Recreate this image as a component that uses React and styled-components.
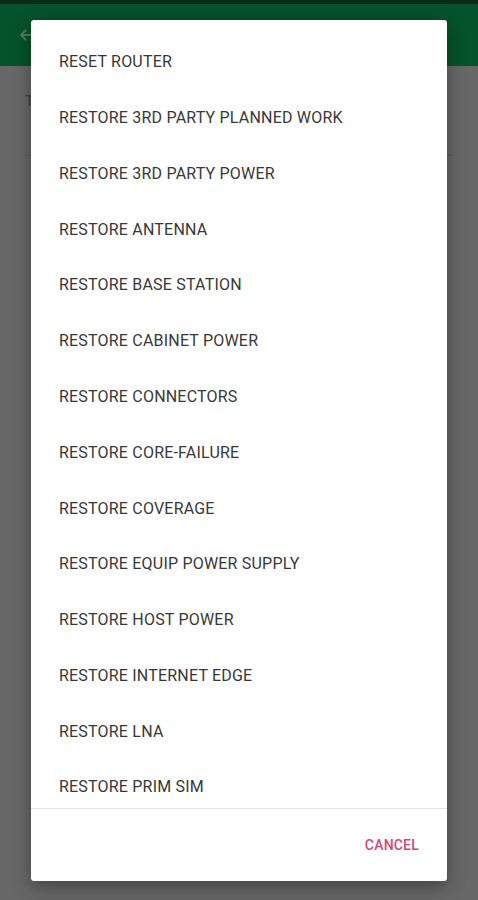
import React from 'react';
import styled, { createGlobalStyle } from 'styled-components';

const GlobalStyle = createGlobalStyle`
    html, body {
        margin: 0;
        padding: 0;
        background: #666666;
        font-family: Roboto, "Liberation Sans", sans-serif;
    }
`;

const Screen = styled.div`
    position: relative;
    width: 478px;
    height: 900px;
    overflow: hidden;
    background: #676767;
    display: flex;
    flex-direction: column;
`;

const StatusBar = styled.div`
    height: 4px;
    background: #0c2a18;
`;

const AppBar = styled.div`
    height: 62px;
    background: #05532a;
    display: flex;
    align-items: center;
    padding: 0 18px;
    color: #4d7a5c;
`;

const Content = styled.div`
    padding: 24px 25px 0;
`;

const FieldLabel = styled.div`
    font-size: 15px;
    color: #3f3f3f;
    padding-top: 2px;
`;

const FieldLine = styled.div`
    margin-top: 45px;
    height: 1px;
    background: #5a5a5a;
`;

const Dialog = styled.div`
    position: absolute;
    left: 31px;
    top: 20px;
    width: 416px;
    height: 861px;
    background: #ffffff;
    border-radius: 3px;
    box-shadow: 0 6px 18px rgba(0, 0, 0, 0.35);
    display: flex;
    flex-direction: column;
    overflow: hidden;
`;

const OptionList = styled.ul`
    list-style: none;
    margin: 0;
    padding: 14px 0 0;
    height: 788px;
    box-sizing: border-box;
    overflow: hidden;
    flex-shrink: 0;
`;

const Option = styled.li`
    height: 55.77px;
    display: flex;
    align-items: center;
    padding-left: 28px;
    font-size: 16px;
    color: #383838;
    letter-spacing: 0.2px;
`;

const Footer = styled.div`
    flex: 1;
    border-top: 1px solid #e4e4e4;
    display: flex;
    align-items: center;
    justify-content: flex-end;
    padding-right: 28px;
`;

const CancelButton = styled.button`
    background: none;
    border: none;
    padding: 0;
    font-family: inherit;
    font-size: 14px;
    font-weight: 500;
    color: #d6457c;
    letter-spacing: 0.2px;
`;

const options = [
    'RESET ROUTER',
    'RESTORE 3RD PARTY PLANNED WORK',
    'RESTORE 3RD PARTY POWER',
    'RESTORE ANTENNA',
    'RESTORE BASE STATION',
    'RESTORE CABINET POWER',
    'RESTORE CONNECTORS',
    'RESTORE CORE-FAILURE',
    'RESTORE COVERAGE',
    'RESTORE EQUIP POWER SUPPLY',
    'RESTORE HOST POWER',
    'RESTORE INTERNET EDGE',
    'RESTORE LNA',
    'RESTORE PRIM SIM',
];

function App() {
    return (
        <Screen>
            <GlobalStyle />
            <StatusBar />
            <AppBar>
                <svg width="18" height="18" viewBox="0 0 24 24" fill="none" stroke="currentColor" strokeWidth="2.5">
                    <path d="M20 12H5M11 5l-7 7 7 7" />
                </svg>
            </AppBar>
            <Content>
                <FieldLabel>T</FieldLabel>
                <FieldLine />
            </Content>
            <Dialog>
                <OptionList>
                    {options.map((option) => (
                        <Option key={option}>{option}</Option>
                    ))}
                </OptionList>
                <Footer>
                    <CancelButton>CANCEL</CancelButton>
                </Footer>
            </Dialog>
        </Screen>
    );
}

export default App;
